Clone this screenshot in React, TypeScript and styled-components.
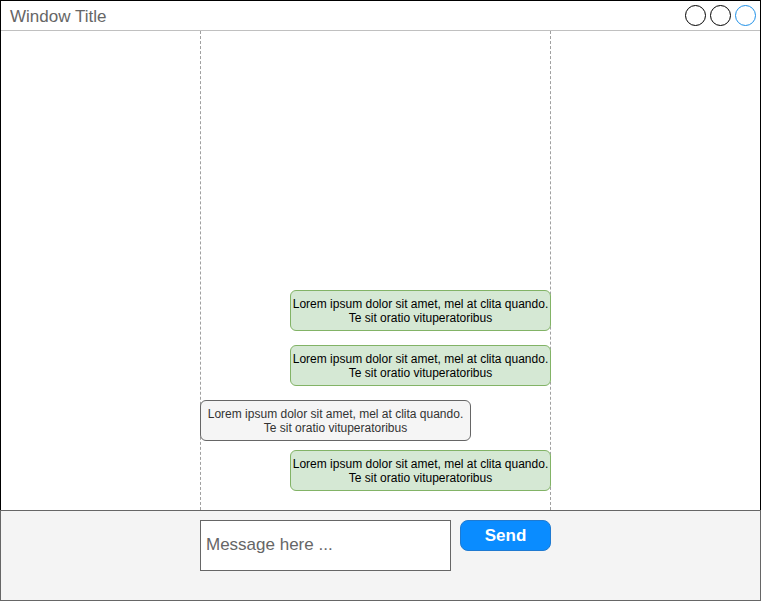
import React from "react";
import styled, { createGlobalStyle } from "styled-components";

const Global = createGlobalStyle`
  html, body { margin: 0; padding: 0; background: #ffffff; }
  body { font-family: "Liberation Sans", Arial, Helvetica, sans-serif; }
  * { box-sizing: border-box; }
`;

const Page = styled.div`
  width: 761px;
  display: flex;
  flex-direction: column;
`;

const Window = styled.div`
  height: 510px;
  border: 1px solid #000000;
  border-bottom: none;
  display: flex;
  flex-direction: column;
  background: #ffffff;
`;

const TitleBar = styled.div`
  height: 30px;
  border-bottom: 1px solid #c0c0c0;
  display: flex;
  align-items: center;
  justify-content: space-between;
  padding: 0 4px 0 9px;
`;

const Title = styled.span`
  font-size: 17px;
  color: #666666;
  line-height: 1;
  margin-top: 2px;
`;

const Controls = styled.div`
  display: flex;
  gap: 4px;
  align-items: center;
  margin-bottom: 1px;
`;

const Dot = styled.span<{ $blue?: boolean }>`
  width: 21px;
  height: 21px;
  border-radius: 50%;
  border: 1px solid ${(p) => (p.$blue ? "#1e90e8" : "#000000")};
  background: #ffffff;
`;

const Body = styled.div`
  flex: 1;
  display: flex;
  padding-left: 199px;
`;

const Column = styled.div`
  width: 351px;
  border-left: 1px dashed #a0a0a0;
  border-right: 1px dashed #a0a0a0;
  display: flex;
  flex-direction: column;
  justify-content: flex-end;
  padding-bottom: 19px;
`;

const Bubble = styled.div<{ $mine?: boolean; $top: number }>`
  margin-top: ${(p) => p.$top}px;
  align-self: ${(p) => (p.$mine ? "flex-end" : "flex-start")};
  margin-left: ${(p) => (p.$mine ? "0" : "-1px")};
  margin-right: ${(p) => (p.$mine ? "-1px" : "0")};
  width: ${(p) => (p.$mine ? 261 : 271)}px;
  height: 41px;
  border-radius: 6px;
  border: 1px solid ${(p) => (p.$mine ? "#82b366" : "#666666")};
  background: ${(p) => (p.$mine ? "#d5e8d4" : "#f5f5f5")};
  color: ${(p) => (p.$mine ? "#000000" : "#333333")};
  font-size: 12px;
  line-height: 14px;
  text-align: center;
  white-space: nowrap;
  display: flex;
  align-items: center;
  justify-content: center;
  padding-top: 1px;
`;

const Footer = styled.div`
  height: 91px;
  border: 1px solid #666666;
  background: #f4f4f4;
  display: flex;
  align-items: flex-start;
  padding: 9px 0 0 199px;
  gap: 9px;
`;

const Input = styled.div`
  width: 251px;
  height: 51px;
  border: 1px solid #666666;
  background: #ffffff;
  display: flex;
  align-items: center;
  padding: 0 0 2px 5px;
  font-size: 17px;
  color: #666666;
`;

const SendButton = styled.button`
  width: 91px;
  height: 31px;
  border: 1px solid #1f7ad1;
  border-radius: 8px;
  background: #0a8cff;
  color: #ffffff;
  font-family: "Liberation Sans", Arial, sans-serif;
  font-weight: bold;
  font-size: 17px;
  padding: 0;
  cursor: pointer;
`;

const messages = [
  { mine: true, top: 0 },
  { mine: true, top: 14 },
  { mine: false, top: 14 },
  { mine: true, top: 9 },
];

export default function App() {
  return (
    <>
      <Global />
      <Page>
        <Window>
          <TitleBar>
            <Title>Window Title</Title>
            <Controls>
              <Dot />
              <Dot />
              <Dot $blue />
            </Controls>
          </TitleBar>
          <Body>
            <Column>
              {messages.map((m, i) => (
                <Bubble key={i} $mine={m.mine} $top={m.top}>
                  Lorem ipsum dolor sit amet, mel at clita quando.
                  <br />
                  Te sit oratio vituperatoribus
                </Bubble>
              ))}
            </Column>
          </Body>
        </Window>
        <Footer>
          <Input>Message here ...</Input>
          <SendButton>Send</SendButton>
        </Footer>
      </Page>
    </>
  );
}
